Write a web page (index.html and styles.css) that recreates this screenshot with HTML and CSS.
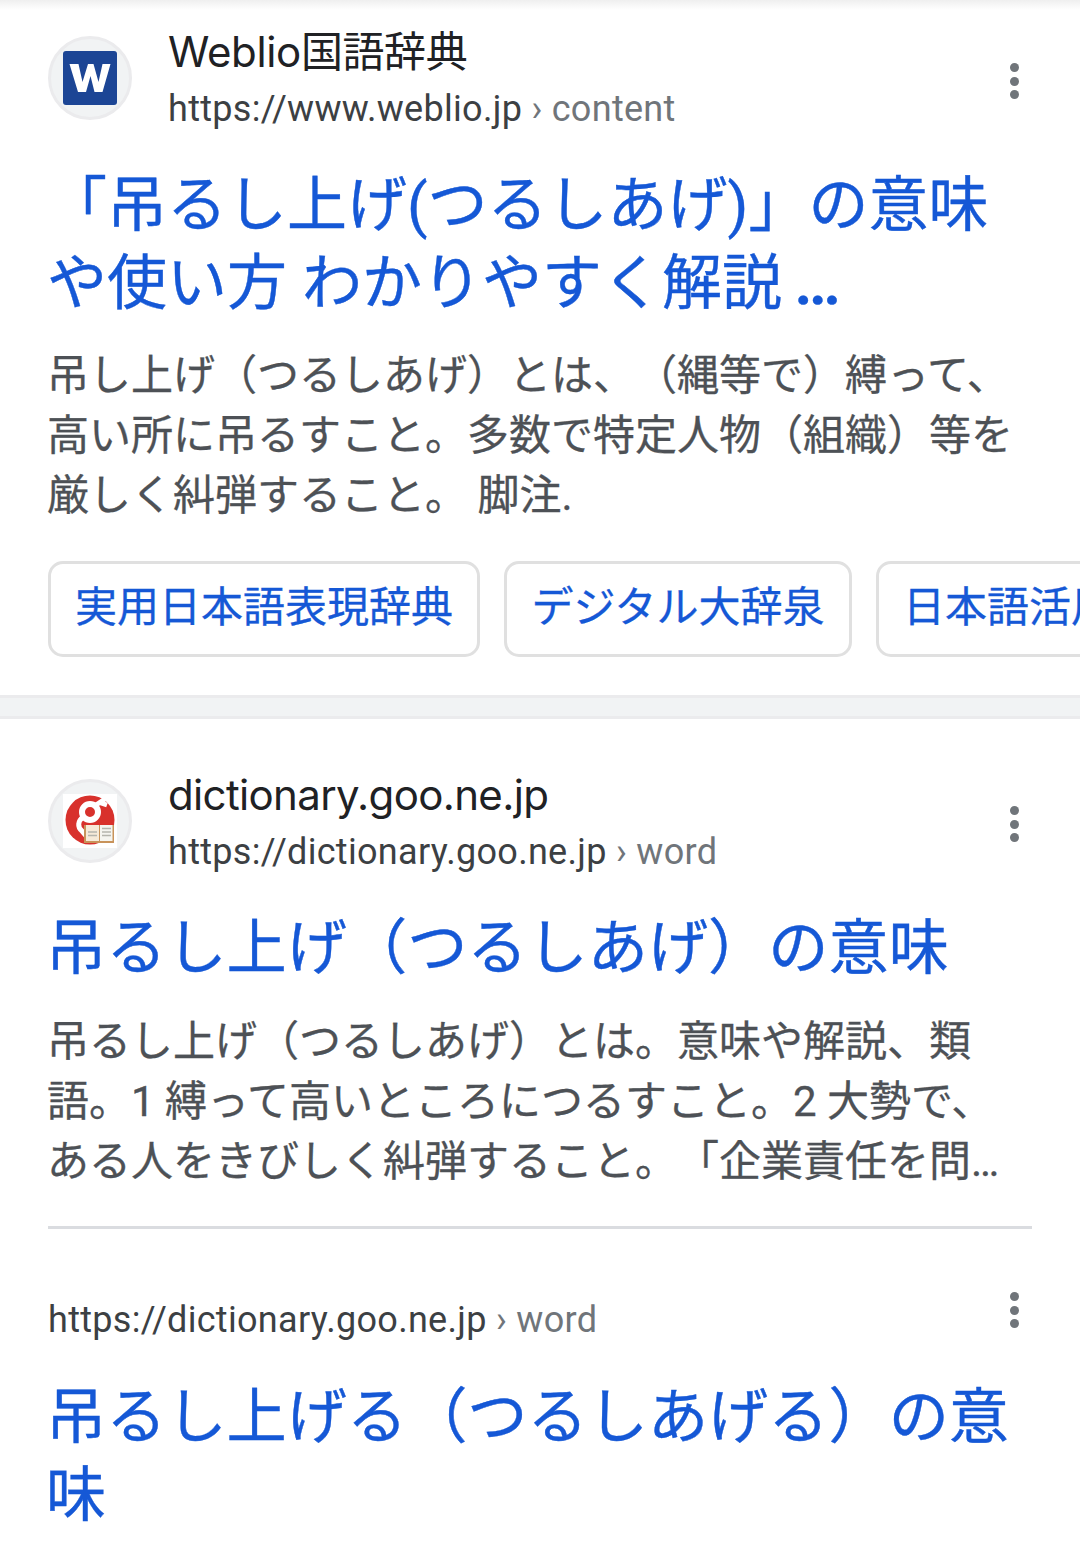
FILE: index.html
```html
<!DOCTYPE html>
<html lang="ja">
<head>
<meta charset="utf-8">
<title>吊るし上げ</title>
<link rel="stylesheet" href="styles.css">
</head>
<body>
<div class="top-shade"></div>
<section class="card card-first">
  <header class="site">
    <div class="favicon">
      <svg class="logo" viewBox="0 0 54 54"><rect width="54" height="54" rx="3" fill="#1c4595"/><path d="M6.500 13H15.500L19.500 31L25 13H30.500L35.500 31L39.500 13H47.500L39.500 41H31.500L27.500 25L23 41H15Z" fill="#fff"/></svg>
    </div>
    <div class="site-text">
      <div class="site-name"><span class="latin-a">Weblio</span>国語辞典</div>
      <div class="url">https://www.weblio.jp<span class="crumb"> › content</span></div>
    </div>
    <div class="more"><i></i><i></i><i></i></div>
  </header>
  <h2 class="title title-first">「吊るし上げ(つるしあげ)」の意味<br>や使い方 わかりやすく解説 <span class="dots">...</span></h2>
  <p class="snippet">吊し上げ（つるしあげ）とは、（縄等で）縛って、<br>高い所に吊るすこと。多数で特定人物（組織）等を<br>厳しく糾弾すること。 脚注.</p>
  <div class="chips">
    <a class="chip">実用日本語表現辞典</a>
    <a class="chip">デジタル大辞泉</a>
    <a class="chip">日本語活用形辞典</a>
  </div>
</section>
<div class="band"></div>
<section class="card card-second">
  <header class="site">
    <div class="favicon">
      <svg class="logo" viewBox="0 0 54 54"><rect width="54" height="54" fill="#fff"/><circle cx="27" cy="26" r="24.500" fill="#d8312c"/><circle cx="27" cy="18" r="8" fill="none" stroke="#fff" stroke-width="6"/><path d="M33 11L42 5M38 9L44 11" stroke="#fff" stroke-width="5" fill="none"/><path d="M20 23C15 27 14 33 19 37L25 44" stroke="#fff" stroke-width="5" fill="none"/><rect x="21" y="31" width="30" height="18" fill="#c8935a"/><rect x="23" y="31" width="13" height="16" fill="#f6ead8"/><rect x="37" y="31" width="12.500" height="16" fill="#f5f5f0"/><path d="M39 34.500H48M39 38H48M39 41.500H48M25 38H34M25 41.500H34" stroke="#b5b5ad" stroke-width="1.500"/></svg>
    </div>
    <div class="site-text">
      <div class="site-name"><span class="latin-b">dictionary.goo.ne.jp</span></div>
      <div class="url">https://dictionary.goo.ne.jp<span class="crumb"> › word</span></div>
    </div>
    <div class="more"><i></i><i></i><i></i></div>
  </header>
  <h2 class="title title-second">吊るし上げ（つるしあげ）の意味</h2>
  <p class="snippet snippet-second">吊るし上げ（つるしあげ）とは。意味や解説、類<br>語。1 縛って高いところにつるすこと。2 大勢で、<br>ある人をきびしく糾弾すること。「企業責任を問…</p>
  <hr class="rule">
  <div class="sub-head">
    <div class="url">https://dictionary.goo.ne.jp<span class="crumb"> › word</span></div>
    <div class="more"><i></i><i></i><i></i></div>
  </div>
  <h2 class="title title-third">吊るし上げる（つるしあげる）の意<br>味</h2>
</section>
</body>
</html>
```
FILE: styles.css
```css
* { box-sizing: border-box; }
html, body { margin: 0; padding: 0; }
body {
  width: 1080px;
  height: 1542px;
  overflow: hidden;
  background: #fff;
  position: relative;
  font-family: "Roboto", "Noto Sans CJK JP", sans-serif;
  text-spacing-trim: space-all;
}
.top-shade {
  position: absolute;
  left: 0;
  right: 0;
  top: 0;
  height: 10px;
  background: linear-gradient(#efefef, #fff);
}
.card { padding: 0 48px; }
.card-first { height: 695px; padding-top: 24px; }
.card-second { padding-top: 48px; }
.band {
  height: 24px;
  background: #f1f3f4;
  border-top: 3px solid #ebebed;
  border-bottom: 3px solid #ebebed;
}
.site { display: flex; align-items: flex-start; height: 112px; }
.favicon {
  width: 84px;
  height: 84px;
  margin-top: 12px;
  border-radius: 50%;
  background: #f1f3f4;
  border: 3px solid #ebebed;
  display: flex;
  align-items: center;
  justify-content: center;
  flex: none;
}
.logo { width: 54px; height: 54px; display: block; filter: blur(0.5px); }
.site-text { margin-left: 36px; flex: 1; }
.site-name {
  font-family: "Inter", "Noto Sans CJK JP", sans-serif;
  font-size: 42px;
  line-height: 56px;
  letter-spacing: -0.4px;
  color: #202124;
}
.latin-a { letter-spacing: -0.35px; }
.latin-b { letter-spacing: -0.65px; }
.url {
  font-size: 36px;
  line-height: 54px;
  padding-top: 2px;
  color: #3c4043;
  letter-spacing: 0.3px;
  white-space: pre;
}
.crumb { color: #70757a; }
.more {
  width: 36px;
  display: flex;
  flex-direction: column;
  align-items: center;
  gap: 4.500px;
  flex: none;
  margin-top: 39px;
}
.more i { width: 9px; height: 9px; border-radius: 50%; background: #70757a; display: block; }
.title {
  margin: 0 0 0 -2px;
  font-weight: 400;
  font-size: 60.2px;
  line-height: 78px;
  color: #1558d6;
  white-space: nowrap;
  -webkit-text-stroke: 0.4px #1558d6;
}
.dots { font-weight: 700; letter-spacing: -3px; margin-left: -2px; }
.title-first { margin-top: 31px; margin-left: -1px; font-size: 60px; }
.title-second { margin-top: 31px; }
.title-third { margin-top: 12px; }
.snippet {
  margin: 23px 0 0 -1px;
  font-size: 42px;
  line-height: 60px;
  color: #4d5156;
  white-space: nowrap;
  -webkit-text-stroke: 0.3px #4d5156;
}
.snippet-second { margin-top: 24px; }
.chips {
  display: flex;
  gap: 24.400px;
  margin-top: 35px;
  margin-right: -48px;
  overflow: hidden;
}
.chip {
  flex: none;
  height: 96px;
  padding: 0 24px;
  border: 3px solid #e0e0e0;
  border-radius: 15px;
  font-size: 42px;
  line-height: 88px;
  color: #1558d6;
  -webkit-text-stroke: 0.3px #1558d6;
}
.rule { margin: 34px 0 0; border: 0; height: 3px; background: #dadce0; }
.sub-head { display: flex; justify-content: space-between; margin-top: 62px; height: 76px; align-items: flex-start; }
.sub-head .more { margin-top: 1px; }
```
